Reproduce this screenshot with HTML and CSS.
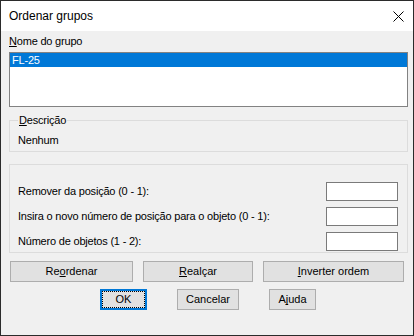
FILE: index.html
```html
<!DOCTYPE html>
<html lang="pt">
<head>
<meta charset="UTF-8">
<meta name="viewport" content="width=device-width, initial-scale=1.0">
<title>Ordenar grupos</title>
<link rel="stylesheet" href="styles.css">
</head>
<body>

<div class="dialog">
  <div class="titlebar">
    <span class="title">Ordenar grupos</span>
    <span class="close">
      <svg width="11" height="11" viewBox="0 0 11 11">
        <path d="M0.5 0.5 L10.5 10.5 M10.5 0.5 L0.5 10.5" stroke="#000" stroke-width="1" fill="none"/>
      </svg>
    </span>
  </div>

  <div class="client">
    <div class="field-label"><u>N</u>ome do grupo</div>
    <div class="listbox">
      <div class="list-item selected">FL-25</div>
    </div>

    <!-- Descrição -->
    <fieldset class="group desc">
      <legend><u>D</u>escrição</legend>
      <div class="desc-text">Nenhum</div>
    </fieldset>

    <!-- Posições -->
    <fieldset class="group params">
      <div class="row">
        <label for="from">Remover da posição (0 - 1):</label>
        <input type="text" id="from">
      </div>
      <div class="row">
        <label for="to">Insira o novo número de posição para o objeto (0 - 1):</label>
        <input type="text" id="to">
      </div>
      <div class="row">
        <label for="count">Número de objetos (1 - 2):</label>
        <input type="text" id="count">
      </div>
    </fieldset>

    <div class="actions">
      <button class="btn w-reorder">Re<u>o</u>rdenar</button>
      <button class="btn w-highlight"><u>R</u>ealçar</button>
      <button class="btn w-invert"><u>I</u>nverter ordem</button>
    </div>

    <div class="actions footer">
      <button class="btn w-small default">OK</button>
      <button class="btn w-cancel">Cancelar</button>
      <button class="btn w-small">A<u>j</u>uda</button>
    </div>
  </div>
</div>

</body>
</html>
```

FILE: styles.css
```css
* { box-sizing: border-box; }

body {
  margin: 0; padding: 0;
  font-family: "Liberation Sans", Arial, sans-serif;
  font-size: 11px;
  color: #000;
  background: #f0f0f0;
}

u { text-decoration-skip-ink: none; }

.dialog {
  width: 414px; height: 336px;
  border: 1px solid #2b2b2b;
  display: flex;
  flex-direction: column;
  background: #f0f0f0;
}

/* Barra de título */
.titlebar {
  height: 30px;
  flex: none;
  background: #fff;
  display: flex;
  align-items: center;
  justify-content: space-between;
  padding: 0 9px 0 8px;
}
.title { font-size: 12px; }
.close { display: flex; }

/* Área do cliente */
.client {
  flex: 1;
  padding: 4px 5px 0 8px;
  line-height: 13px;
  letter-spacing: -0.2px;
}

.field-label { height: 13px; margin-bottom: 4px; }

.listbox {
  width: 399px; height: 55px;
  background: #fff;
  border: 1px solid #828282;
}
.list-item {
  height: 14px;
  line-height: 14px;
  padding-left: 2px;
}
.list-item.selected { background: #0078d7; color: #fff; }

/* Group boxes */
.group {
  width: 399px;
  margin: 0;
  border: 1px solid #dcdcdc;
  min-inline-size: 0;
}
.group legend {
  padding: 0 1px;
  line-height: 13px;
}
.desc {
  margin-top: 7px;
  padding: 7px 8px 4px;
}
.params {
  margin-top: 12px;
  padding: 17px 9px 1px 8px;
  display: flex;
  flex-direction: column;
  gap: 6px;
}

.row {
  display: flex;
  justify-content: space-between;
  align-items: center;
  height: 19px;
}
.row input {
  width: 72px; height: 19px;
  margin: 0;
  border: 1px solid #7a7a7a;
  background: #fff;
  padding: 0 2px;
  font: inherit;
}

/* Botões */
.actions {
  display: flex;
  gap: 10px;
  margin-top: 8px;
  padding-left: 1px;
}
.footer {
  margin-top: 7px;
  gap: 30px;
  padding-left: 91px;
}
.btn {
  height: 21px;
  margin: 0;
  padding: 0;
  background: #e1e1e1;
  border: 1px solid #adadad;
  font: inherit;
  color: #000;
}
.btn.default {
  border: 2px solid #0078d7;
  outline: 1px dotted #000;
  outline-offset: -3px;
}
.w-reorder { width: 123px; }
.w-highlight { width: 110px; }
.w-invert { width: 141px; }
.w-small { width: 47px; }
.w-cancel { width: 62px; }
```
